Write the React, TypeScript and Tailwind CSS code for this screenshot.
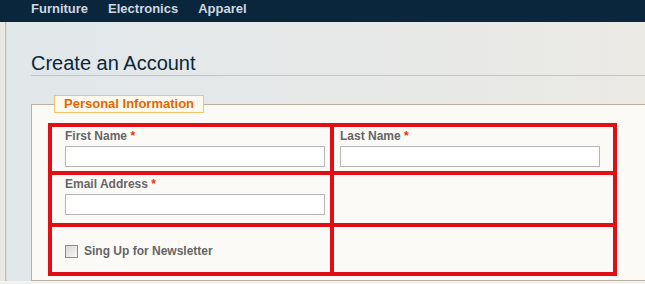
// Create an Account — Personal Information form

const navItems = ['Furniture', 'Electronics', 'Apparel'];

function Label({ text }: { text: string }) {
  return (
    <label className="block text-[12px] font-bold leading-[19px] text-[#666]">
      {text} <span className="text-[#eb340a]">*</span>
    </label>
  );
}

function TextInput() {
  return <input type="text" className="block h-[21px] w-[260px] border border-[#b6b6b6] bg-white outline-none" />;
}

export default function App() {
  return (
    <div className="min-h-screen bg-[#f2f2ee] font-['Liberation_Sans',Arial,sans-serif]">
      {/* Top nav */}
      <nav className="flex h-[22px] items-start gap-[20px] bg-[#0a263c] pl-[31px] pt-[1px]">
        {navItems.map((item) => (
          <a key={item} className="text-[13px] font-bold leading-[16px] text-[#cdd8e1]">
            {item}
          </a>
        ))}
      </nav>

      <div className="flex">
        {/* Left shadow strip */}
        <div className="w-[5px] bg-[#e9e7e2]" />
        <div className="w-[1px] bg-[#bcbcbc]" />
        <div className="w-[1px] bg-[#d8d8d8]" />

        {/* Main */}
        <main className="flex-1 bg-gradient-to-r from-[#e1e7ea] to-[#ebeae5] pl-[24px]">
          <h1 className="border-b border-[#c4c4c2] pt-[29px] text-[20px] font-normal leading-[24px] text-[#0a263c]">
            Create an Account
          </h1>

          <fieldset className="mt-[19px] border-y border-l border-[#bbafa0] bg-[#fbfaf6] pb-[4px] pl-[16px] pt-[10px]">
            <legend className="ml-[6px] border border-[#f3c46e] bg-[#fefaf0] px-[9px] text-[13px] font-bold leading-[16px] text-[#e26703]">
              Personal Information
            </legend>

            <div className="w-[569px] border-2 border-[#e10f14]">
              <div className="grid grid-cols-[282px_283px]">
                {/* Row 1 */}
                <div className="h-[48px] border-2 border-[#e10f14] pl-[13px]">
                  <Label text="First Name" />
                  <TextInput />
                </div>
                <div className="h-[48px] border-2 border-[#e10f14] pl-[6px]">
                  <Label text="Last Name" />
                  <TextInput />
                </div>

                {/* Row 2 */}
                <div className="h-[52px] border-2 border-[#e10f14] pl-[13px]">
                  <Label text="Email Address" />
                  <TextInput />
                </div>
                <div className="h-[52px] border-2 border-[#e10f14]" />

                {/* Row 3 */}
                <div className="flex h-[49px] items-center gap-[6px] border-2 border-[#e10f14] pl-[13px] pt-[4px]">
                  <span className="h-[13px] w-[13px] border border-[#8c8c8c] bg-gradient-to-br from-[#d8d8d6] to-[#f6f6f4]" />
                  <span className="pb-[2px] text-[12px] font-bold leading-[14px] text-[#666]">
                    Sing Up for Newsletter
                  </span>
                </div>
                <div className="h-[49px] border-2 border-[#e10f14]" />
              </div>
            </div>
          </fieldset>
        </main>
      </div>
    </div>
  );
}
